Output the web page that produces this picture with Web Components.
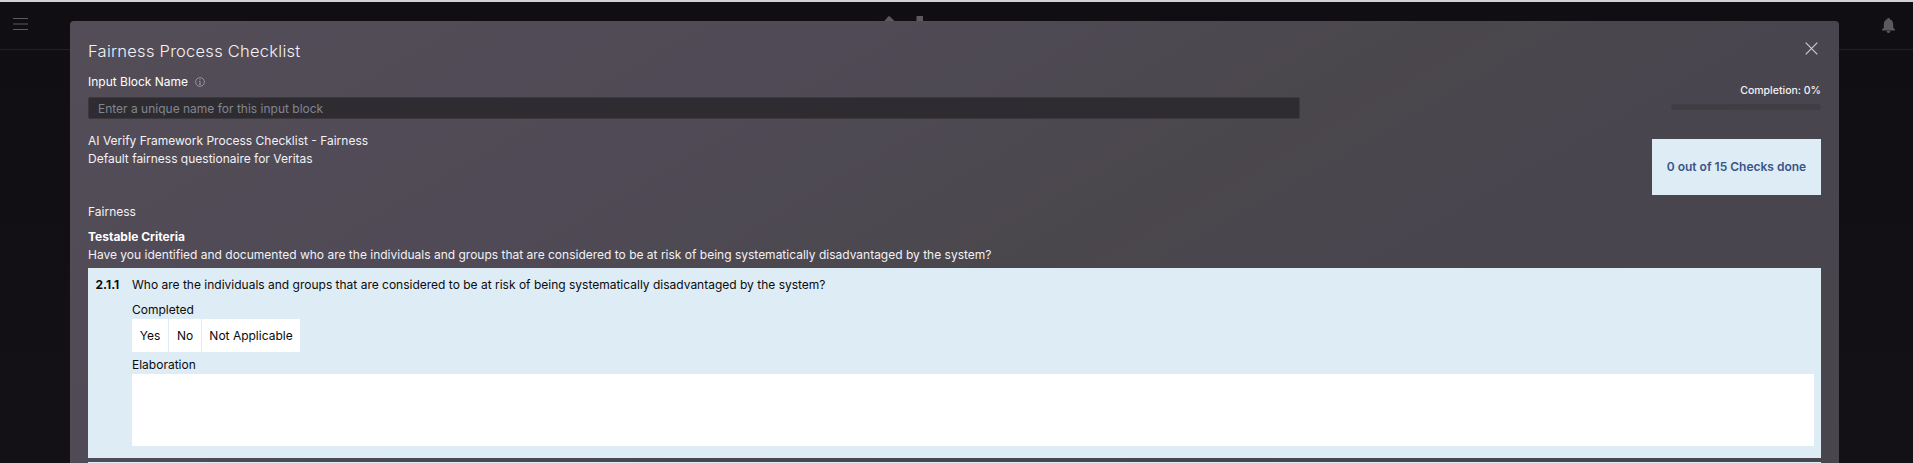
<!DOCTYPE html>
<html lang="en">
<head>
<meta charset="utf-8">
<title>Fairness Process Checklist</title>
<style>
html, body { margin: 0; height: 100%; overflow: hidden; background: #110f14; }
body { font-family: Inter, "Liberation Sans", sans-serif; font-size: 12px; line-height: 18px; color: #f3f1f5; }
</style>
</head>
<body>
<app-shell>
  <checklist-modal heading="Fairness Process Checklist">
    <block-name-field slot="top" label="Input Block Name" hint="Enter a unique name for this input block"></block-name-field>
    <completion-bar slot="top" value="0"></completion-bar>
    <checklist-summary done="0" total="15">
      <div>AI Verify Framework Process Checklist - Fairness</div>
      <div>Default fairness questionaire for Veritas</div>
    </checklist-summary>
    <criteria-section name="Fairness" criteria="Have you identified and documented who are the individuals and groups that are considered to be at risk of being systematically disadvantaged by the system?">
      <check-card number="2.1.1">Who are the individuals and groups that are considered to be at risk of being systematically disadvantaged by the system?</check-card>
      <card-placeholder></card-placeholder>
    </criteria-section>
  </checklist-modal>
</app-shell>
<script>
const define = (name, render) => customElements.define(name, class extends HTMLElement {
  connectedCallback() {
    if (this.shadowRoot) return;
    this.attachShadow({ mode: 'open' }).innerHTML = render(k => this.getAttribute(k) || '');
  }
});

define('app-shell', () => `
<style>
:host { display: block; position: relative; height: 463px; overflow: hidden; box-sizing: border-box; border-top: 2px solid #d4d2d4; background: linear-gradient(#100e13, #131115); }
header { height: 47px; border-bottom: 1px solid #222025; display: grid; grid-template-columns: 1fr auto 1fr; }
header svg { display: block; }
.menu { margin: 15px 0 0 13px; }
.logo { margin: 13px 10px 0 0; }
.bell { margin: 15px 17px 0 0; justify-self: end; }
.overlay { position: absolute; left: 70px; right: 74px; top: 19px; }
</style>
<header>
  <svg class="menu" width="15" height="14" stroke="#5b595e" stroke-width="1.1"><path d="M0 1.5h15M0 7h15M0 12.5h15"/></svg>
  <svg class="logo" width="144" height="8" fill="#5b595d"><path d="M3.500 7L8.500 1.200h1.200L15.500 7v1h-12zM36.500 1H43v7h-6.500z"/></svg>
  <svg class="bell" width="15" height="17" fill="#5b595d"><path d="M7.500 1c.8 0 1.200.500 1.300 1.200C11.200 2.900 12.200 5 12.200 7.200v3.600l1.800 1.800v.8H1v-.8l1.800-1.800V7.200C2.800 5 3.800 2.900 6.200 2.200 6.300 1.500 6.700 1 7.500 1zM5.600 14h3.800a1.900 1.900 0 0 1-3.800 0z"/></svg>
</header>
<div class="overlay"><slot></slot></div>`);

define('checklist-modal', a => `
<style>
:host { display: block; height: 700px; box-sizing: border-box; padding: 20px 18px; border-radius: 4px; background: linear-gradient(150deg, #534d58 0%, #4f4a55 28%, #4a474c 46%, #49454f 62%, #48464b 100%); }
.head { display: flex; justify-content: space-between; height: 32px; }
h1 { margin: 0; font-size: 16.500px; line-height: 20px; font-weight: 300; letter-spacing: .25px; color: #f4f2f6; }
svg { margin: 1px 3px 0 0; }
.top { display: flex; justify-content: space-between; height: 59px; }
</style>
<div class="head"><h1>${a('heading')}</h1><svg width="13" height="13" stroke="#d1c4dd" stroke-width="1.2"><path d="M.7.7l11.600 11.600M12.300.7L.7 12.300"/></svg></div>
<div class="top"><slot name="top"></slot></div>
<slot></slot>`);

define('block-name-field', a => `
<style>
:host { display: block; width: 1212px; }
label { display: flex; align-items: center; gap: 7px; height: 18px; color: #fff; }
.input { margin-top: 6px; box-sizing: border-box; height: 22px; border: 1px solid #3b383e; border-radius: 2px; background: #2f2c31; padding: 0 9px; line-height: 21px; color: #808593; }
</style>
<label><span>${a('label')}</span><svg width="10" height="10" fill="none" stroke="#96919f"><circle cx="5" cy="5" r="4.400"/><path d="M5 4.300v3.200M4.200 4.500H5M4 7.400h2M5 2.300v1"/></svg></label>
<div class="input"><span>${a('hint')}</span></div>`);

define('completion-bar', a => `
<style>
:host { display: block; width: 150px; padding-top: 10px; font-size: 10.500px; font-weight: 500; line-height: 16px; text-align: right; }
.track { margin-top: 5px; height: 6px; border-radius: 3px; background: #413e43; }
</style>
<span>Completion: ${a('value')}%</span><div class="track"></div>`);

define('checklist-summary', a => `
<style>
:host { display: flex; justify-content: space-between; height: 71px; }
.badge { margin-top: 7px; width: 169px; height: 56px; background: #deecf5; color: #395589; font-weight: 600; line-height: 56px; text-align: center; }
</style>
<div><slot></slot></div><div class="badge"><span>${a('done')} out of ${a('total')} Checks done</span></div>`);

define('criteria-section', a => `
<style>
:host { display: block; }
.title { margin-top: 7px; font-weight: 700; color: #fff; }
.cards { display: grid; gap: 4px; margin-top: 4px; }
</style>
<div><span>${a('name')}</span></div>
<div class="title"><span>Testable Criteria</span></div>
<div><span>${a('criteria')}</span></div>
<div class="cards"><slot></slot></div>`);

define('card-placeholder', () => `
<style>:host { display: block; height: 190px; background: #deecf5; }</style>`);

define('check-card', a => `
<style>
:host { display: grid; grid-template-columns: 36.500px 1fr; height: 190px; box-sizing: border-box; padding: 8px 7px 0 7.500px; background: #deecf5; color: #0b0b0d; }
b { font-weight: 700; }
.label { margin-top: 7px; }
.choices { display: flex; gap: 1px; height: 33px; line-height: 33px; }
.choices div { background: #fff; text-align: center; }
.area { height: 72px; background: #fff; }
.el { margin-top: 4px; }
</style>
<b><span>${a('number')}</span></b>
<div><div><slot></slot></div>
<div class="label"><span>Completed</span></div>
<div class="choices"><div style="width:36px"><span>Yes</span></div><div style="width:32px"><span>No</span></div><div style="width:98px"><span>Not Applicable</span></div></div>
<div class="el"><span>Elaboration</span></div>
<div class="area"></div></div>`);
</script>
</body>
</html>
